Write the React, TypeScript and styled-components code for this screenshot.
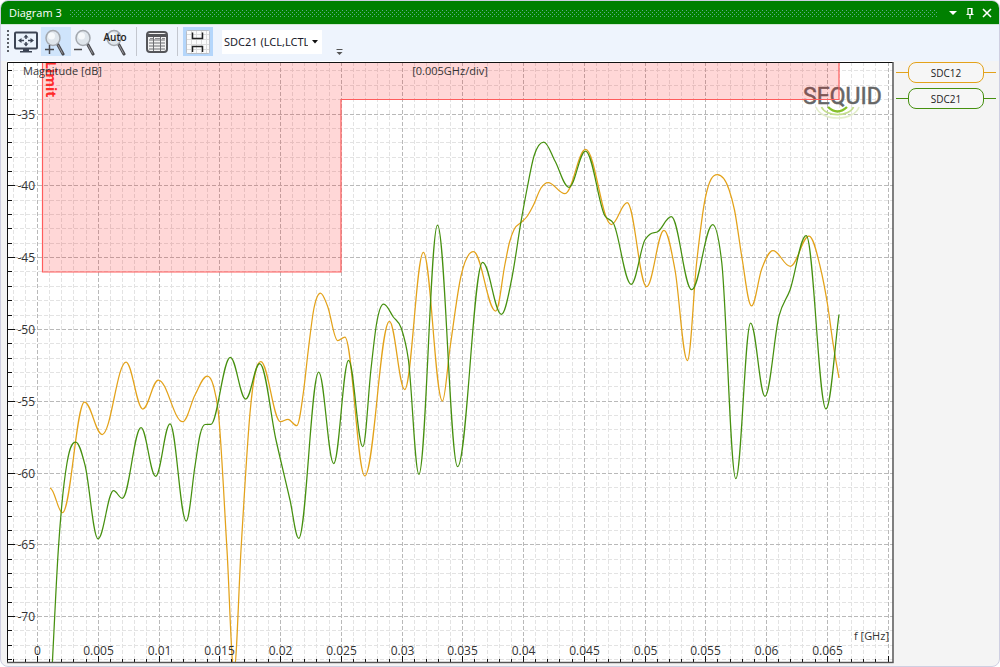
import React from "react";
import styled, { createGlobalStyle, css } from "styled-components";

const GlobalStyle = createGlobalStyle`
  *, *::before, *::after { box-sizing: border-box; }
  body { margin: 0; background: #ffffff; font-family: "Noto Sans", "Open Sans", sans-serif; font-size: 12px; color: #222222; }
`;

const Panel = styled.main`
  display: flex;
  flex-direction: column;
  min-height: 100vh;
  border: 1px solid #cfcfe2;
  border-radius: 8px;
  overflow: hidden;
  background: #f4f4f4;
`;

const TitleBar = styled.header`
  display: flex;
  align-items: center;
  gap: 8px;
  height: 24px;
  padding: 0 4px 0 8px;
  background: #008000;
  border-bottom: 1px solid #cfe6d4;
  color: #ffffff;
`;

const Title = styled.h1`
  margin: 0;
  font: 500 11px/20px "Open Sans", "Noto Sans", sans-serif;
`;

const Grip = styled.svg`
  flex: 1;
  min-width: 0;
  height: 8px;
`;

const TitleActions = styled.div`
  display: flex;
  gap: 1px;
`;

const TitleButton = styled.button`
  display: grid;
  place-items: center;
  width: 16px;
  height: 18px;
  padding: 0;
  border: 0;
  background: none;
  color: #ffffff;
`;

const Toolbar = styled.div`
  display: flex;
  align-items: center;
  height: 36px;
  padding: 0 6px 3px;
  background: #eef4fd;
`;

const ToolGrip = styled.span`
  width: 2px;
  height: 24px;
  margin-right: 2px;
  background: repeating-linear-gradient(#5c6068 0 2px, transparent 2px 4px);
`;

const ToolButton = styled.button<{ $state?: "hover" | "checked" }>`
  display: grid;
  place-items: center;
  width: 30px;
  height: 29px;
  padding: 0;
  border: 0;
  background: none;
  ${(p) => p.$state === "hover" && css`background: #cfe4fb;`}
  ${(p) => p.$state === "checked" && css`background: #b4d6fb;`}
`;

const Separator = styled.span`
  width: 1px;
  height: 29px;
  margin: 0 5px;
  background: #c3c7cf;
`;

const Combo = styled.div`
  display: grid;
  grid-template-columns: 1fr 16px;
  align-items: center;
  width: 100px;
  height: 24px;
  margin-left: 9px;
  background: #ffffff;
`;

const ComboSelect = styled.select`
  grid-area: 1 / 1 / 2 / 3;
  width: 100%;
  height: 24px;
  padding: 0 14px 0 2px;
  border: 0;
  appearance: none;
  background: none;
  color: #1b1b2c;
  font: 11px "Noto Sans", sans-serif;
`;

const ComboArrow = styled.svg`
  grid-area: 1 / 2;
  pointer-events: none;
`;

const Overflow = styled.button`
  align-self: flex-end;
  height: 10px;
  margin-left: 13px;
  padding: 0;
  border: 0;
  background: none;
  display: grid;
`;

const Body = styled.div`
  display: flex;
  align-items: flex-start;
  flex: 1;
  padding: 0 0 2px 6px;
`;

const Chart = styled.svg`
  display: block;
  flex: 1;
  min-width: 0;
  height: auto;
  background: #ffffff;
  font-family: "Open Sans", "Noto Sans", sans-serif;
`;

const Legend = styled.ul`
  display: flex;
  flex-direction: column;
  gap: 5px;
  width: 105px;
  margin: 0;
  padding: 1px 3px 0 2px;
  list-style: none;
`;

const LegendItem = styled.li<{ $color: string }>`
  display: flex;
  align-items: center;
  &::before, &::after {
    content: "";
    flex: 1;
    height: 1px;
    background: ${(p) => p.$color};
  }
`;

const LegendPill = styled.button<{ $color: string }>`
  width: 76px;
  height: 21px;
  padding: 0;
  border: 1px solid ${(p) => p.$color};
  border-radius: 8px;
  background: #f6f6f6;
  color: #222222;
  font: 10px/18px "Open Sans", "Noto Sans", sans-serif;
`;

const ORANGE = "#e3a21a";
const GREEN = "#46900f";

type Point = [number, number];

const SDC12: Point[] = [
  [50, 488], [62.5, 512.7], [84.5, 402], [102.2, 434.5], [126, 362], [142.8, 409], [158.3, 380],
  [182.7, 421.7], [195, 395], [207.3, 376], [213.5, 386], [218.3, 412], [227, 550], [234, 670],
  [241, 550], [244, 500], [250, 413], [260.8, 361.5], [280.5, 421.7], [288, 419.3],
  [296.7, 425.7], [303.3, 393], [308.3, 350], [314, 308], [320.4, 293], [327.5, 306],
  [337.7, 340.7], [344.9, 337], [364.8, 475.9], [389.4, 321.3], [404.7, 389.5], [423.4, 252.3],
  [442.4, 401], [450, 348], [461, 276], [473.4, 251.6], [495.7, 311], [505, 264], [509.3, 243],
  [514.3, 229], [521, 222.5], [527, 216.5], [533.5, 205], [541, 188], [548, 182.5],
  [565, 193.7], [585.6, 149.5], [611.4, 224.5], [627.2, 202.7], [646.6, 286.7], [664, 230.3],
  [675, 270], [687.4, 360.5], [696.7, 262], [705.3, 198], [717.3, 174.7], [729, 189.5],
  [734.5, 210], [742, 258], [751.5, 305.9], [761.7, 269], [773, 250.7], [790.3, 266.3],
  [809, 236], [820, 266], [827.3, 303], [833.3, 345], [839, 378],
];

const SDC21: Point[] = [
  [52.3, 664], [58.3, 550], [61.8, 505], [67, 463], [75.7, 442], [85, 465], [98, 538.8],
  [113.5, 490.7], [122.3, 498.3], [141, 427.6], [155.6, 476.3], [170, 423.8], [186.2, 521],
  [195, 466], [200, 435], [205, 424.5], [211, 424.3],
  [230.3, 357.3], [245.7, 399], [259.7, 363.5], [276, 440], [290, 500], [298.7, 538.3],
  [318.7, 372], [333.7, 463.5], [348.6, 360.3], [362.8, 446.7], [371, 369], [376.5, 324],
  [383.6, 304.2], [393.3, 317], [401.3, 328.3], [408.3, 359], [418.9, 474.3], [437.5, 225],
  [457.6, 466.7], [482.6, 262.3], [501.4, 314.3], [511.7, 279], [521, 221.7], [527, 189],
  [534, 156], [543.8, 142], [555, 161], [569, 187.3], [585.5, 151],
  [605, 216], [613.3, 223], [631.2, 284.3], [645, 239.7], [650, 234.3], [658, 231.5],
  [671.3, 216.7], [691.7, 289.7], [712.7, 224.7], [721.7, 262], [735.8, 478.7], [750.6, 323],
  [765, 396.3], [779, 316], [790, 290], [806.2, 235.7], [826, 408.9], [839, 314.5],
];

/** Monotone cubic interpolation: the given extrema stay the extrema of the curve. */
function smoothPath(pts: Point[]): string {
  const slopes = pts.slice(1).map(([x, y], i) => (y - pts[i][1]) / (x - pts[i][0]));
  const tangents = pts.map(([x], i) => {
    if (i === 0) return pts[1][1] < pts[0][1] ? slopes[0] : 0;
    if (i === pts.length - 1) return slopes[i - 1];
    const a = slopes[i - 1];
    const b = slopes[i];
    if (a * b <= 0) return 0;
    const before = x - pts[i - 1][0];
    const after = pts[i + 1][0] - x;
    const mean = (a * after + b * before) / (before + after);
    const limit = 2.5 * Math.min(Math.abs(a), Math.abs(b));
    return Math.sign(mean) * Math.min(Math.abs(mean), limit);
  });
  let d = `M${pts[0][0]} ${pts[0][1]}`;
  for (let i = 1; i < pts.length; i++) {
    const width = pts[i][0] - pts[i - 1][0];
    const start = width * (tangents[i - 1] === 0 ? 0.37 : 0.333);
    const end = width * (tangents[i] === 0 ? 0.37 : 0.333);
    d += `C${pts[i - 1][0] + start} ${pts[i - 1][1] + tangents[i - 1] * start} ${pts[i][0] - end} ${
      pts[i][1] - tangents[i] * end
    } ${pts[i][0]} ${pts[i][1]}`;
  }
  return d;
}

const X0 = 37.5;
const X_STEP = 12.15;
const Y0 = 114;
const Y_STEP = 14.36;

const xLines = Array.from({ length: 73 }, (_, i) => i - 2).map((n) => ({
  n,
  pos: Math.floor(X0 + n * X_STEP) + 0.5,
  major: n % 5 === 0,
}));
const yLines = Array.from({ length: 42 }, (_, i) => i - 3).map((n) => ({
  n,
  pos: Math.floor(Y0 + n * Y_STEP) + 0.5,
  major: n % 5 === 0,
}));

const LIMIT = "M42.5 62V272H341V99.5H839V62";

function DiagramChart() {
  return (
    <Chart viewBox="7 61 887 603" role="img" aria-label="Magnitude over frequency">
      <defs>
        <clipPath id="plot">
          <rect x="8" y="62" width="885" height="601" />
        </clipPath>
      </defs>
      {[false, true].map((major) => (
        <g key={String(major)} stroke={major ? "#b9b9b9" : "#e3e3e3"} strokeDasharray="4 2">
          {xLines.filter((l) => l.major === major).map((l) => (
            <path key={l.n} d={`M${l.pos} 62V663`} />
          ))}
          {yLines.filter((l) => l.major === major).map((l) => (
            <path key={l.n} d={`M8 ${l.pos}H893`} />
          ))}
        </g>
      ))}
      <g fill="none">
        <path d="M816 107a22 14 0 0 0 43 0" stroke="#e3eecb" strokeWidth="1.6" />
        <path d="M821.500 107a16.500 10 0 0 0 32 0" stroke="#c3de8c" strokeWidth="1.8" />
        <path d="M828 107q9.500 9 19 0" stroke="#86c02a" strokeWidth="2.4" />
      </g>
      <text
        x="803"
        y="104"
        fontFamily="Roboto, sans-serif"
        fontSize="23"
        fontWeight="400"
        fill="#666666"
        stroke="#666666"
        strokeWidth="0.500"
      >
        SEQUID
      </text>
      <g clipPath="url(#plot)">
        <path d={`${LIMIT}Z`} fill="#ff0000" fillOpacity="0.155" />
        <path d={LIMIT} fill="none" stroke="#ff5c5c" strokeWidth="1.200" />
        <text transform="translate(46 61) rotate(90)" fontSize="14" fontWeight="700" fill="#ff2b2b">
          Limit
        </text>
        <path d={smoothPath(SDC12)} fill="none" stroke={ORANGE} strokeWidth="1.250" />
        <path d={smoothPath(SDC21)} fill="none" stroke={GREEN} strokeWidth="1.250" />
      </g>
      <g stroke="#111111">
        {xLines.map((l) => (
          <path key={l.n} d={`M${l.pos} 663V${l.major ? 656 : 659}`} />
        ))}
        {yLines.map((l) => (
          <path key={l.n} d={`M7 ${l.pos}H${l.major ? 15 : 12}`} />
        ))}
      </g>
      <path d="M7.500 663V62.500H893" fill="none" stroke="#111111" />
      <path d="M893 62V662.500H7" fill="none" stroke="#555555" strokeWidth="1.500" />
      <g fontSize="12" fill="#333333">
        {yLines.filter((l) => l.major).map((l) => (
          <text key={l.n} x="35" y={l.pos + 4} textAnchor="end">
            {-35 - l.n}
          </text>
        ))}
        {xLines.filter((l) => l.major && l.n < 70).map((l) => (
          <text key={l.n} x={l.pos} y="655" textAnchor="middle">
            {l.n / 1000}
          </text>
        ))}
      </g>
      <g fontSize="11" fill="#333333">
        <text x="23" y="75">Magnitude [dB]</text>
        <text x="450" y="75" textAnchor="middle">[0.005GHz/div]</text>
        <text x="889" y="640" textAnchor="end">f [GHz]</text>
      </g>
    </Chart>
  );
}

function Lens({ cx, cy }: { cx: number; cy: number }) {
  return (
    <g>
      <path d={`M${cx + 4.5} ${cy + 6}l5.500 10`} stroke="#4a4a4e" strokeWidth="3" strokeLinecap="round" />
      <path d={`M${cx + 5} ${cy + 7}l4.500 8.500`} stroke="#9a9aa0" strokeWidth="1" />
      <ellipse cx={cx} cy={cy} rx="7" ry="7.500" fill="#dfe6ec" stroke="#a4a9af" strokeWidth="1.500" />
      <ellipse cx={cx - 1.5} cy={cy - 2} rx="3.500" ry="3.500" fill="#f6f9fb" />
    </g>
  );
}

function MonitorIcon() {
  return (
    <svg width="26" height="24" viewBox="0 0 26 24">
      <rect x="2" y="2.500" width="22" height="16" rx="1" fill="#eaf2fb" stroke="#3c4454" strokeWidth="2" />
      <path d="M10 19h6v2h3v1.500H7V21h3z" fill="#3c4454" />
      <path d="M13 4.500l2.500 3h-5zM13 16.500l2.500-3h-5zM5 10.500l3.500-2.500v5zM21 10.500l-3.500-2.500v5z" fill="#3c4454" />
      <path d="M7 10.500h4m4 0h4M13 6v3m0 3v3" stroke="#3c4454" strokeWidth="1.500" />
    </svg>
  );
}

function ZoomIcon({ plus }: { plus?: boolean }) {
  return (
    <svg width="26" height="28" viewBox="0 0 26 28">
      <Lens cx={10} cy={10} />
      <path d={plus ? "M2 21.500h9M6.500 17v9" : "M1 21.500h8"} stroke="#4a4a4e" strokeWidth="1.500" />
    </svg>
  );
}

function AutoZoomIcon() {
  return (
    <svg width="28" height="28" viewBox="0 0 28 28">
      <Lens cx={12} cy={10} />
      <text x="13" y="13" textAnchor="middle" fontFamily="Open Sans, sans-serif" fontSize="10" fontWeight="600" fill="#222222">
        Auto
      </text>
    </svg>
  );
}

function TableIcon() {
  return (
    <svg width="24" height="24" viewBox="0 0 24 24">
      <rect x="2" y="2" width="20" height="20" rx="3" fill="#f2f2f2" stroke="#55565a" strokeWidth="2" />
      <path d="M3 4h18v3H3z" fill="#55565a" />
      <path d="M4 10h16M4 13h16M4 16h16M4 19h16M8.500 7v14M15.500 7v14" stroke="#6d6e72" strokeWidth="1" />
      <path d="M5 8.500h3M10 8.500h5M17 8.500h3" stroke="#8a8a8e" />
    </svg>
  );
}

function SplitIcon() {
  return (
    <svg width="26" height="26" viewBox="0 0 26 26">
      <rect x="1.500" y="1.500" width="23" height="23" rx="1" fill="#fbfbfb" stroke="#b9bec6" />
      <path d="M6.500 2v22M11.500 2v22M16.500 2v22M21.500 2v22M2 5.500h22M2 10.500h22M2 15.500h22M2 20.500h22" stroke="#dcdcdc" />
      <path d="M7.500 3.500v6h10v-6M7.500 23v-5.500h10V23" fill="none" stroke="#222222" strokeWidth="1.500" />
    </svg>
  );
}

export default function App() {
  return (
    <>
      <GlobalStyle />
      <Panel>
        <TitleBar>
          <Title>Diagram 3</Title>
          <Grip aria-hidden="true">
            <defs>
              <pattern id="dots" width="4" height="4" patternUnits="userSpaceOnUse">
                <path d="M0 1h1v1H0zM2 3h1v1H2z" fill="#5aab8e" />
              </pattern>
            </defs>
            <rect width="100%" height="8" fill="url(#dots)" />
          </Grip>
          <TitleActions>
            <TitleButton aria-label="Window menu">
              <svg width="8" height="4" viewBox="0 0 8 4"><path d="M0 0h8L4 4z" fill="currentColor" /></svg>
            </TitleButton>
            <TitleButton aria-label="Pin">
              <svg width="8" height="12" viewBox="0 0 8 12">
                <path d="M2 7V1.500h4V7M5.500 1v6M.5 7.500h7M4 8v4" fill="none" stroke="currentColor" strokeWidth="1.200" />
              </svg>
            </TitleButton>
            <TitleButton aria-label="Close">
              <svg width="10" height="10" viewBox="0 0 10 10">
                <path d="M1 1l8 8M9 1l-8 8" stroke="currentColor" strokeWidth="1.600" />
              </svg>
            </TitleButton>
          </TitleActions>
        </TitleBar>
        <Toolbar role="toolbar">
          <ToolGrip />
          <ToolButton aria-label="Fit to window"><MonitorIcon /></ToolButton>
          <ToolButton aria-label="Zoom in" $state="hover"><ZoomIcon plus /></ToolButton>
          <ToolButton aria-label="Zoom out"><ZoomIcon /></ToolButton>
          <ToolButton aria-label="Auto zoom"><AutoZoomIcon /></ToolButton>
          <Separator />
          <ToolButton aria-label="Table"><TableIcon /></ToolButton>
          <Separator />
          <ToolButton aria-label="Limits" aria-pressed="true" $state="checked"><SplitIcon /></ToolButton>
          <Combo>
            <ComboSelect aria-label="Measurement">
              <option>SDC21 (LCL,LCTL)</option>
            </ComboSelect>
            <ComboArrow width="16" height="4" viewBox="0 0 16 4"><path d="M6 0h6L9 3.500z" fill="#111111" /></ComboArrow>
          </Combo>
          <Overflow aria-label="More tools">
            <svg width="9" height="8" viewBox="0 0 9 8"><path d="M1.500 1.500h6" stroke="#555555" /><path d="M1.500 4h6l-3 3z" fill="#555555" /></svg>
          </Overflow>
        </Toolbar>
        <Body>
          <DiagramChart />
          <Legend>
            <LegendItem $color={ORANGE}><LegendPill $color={ORANGE}>SDC12</LegendPill></LegendItem>
            <LegendItem $color={GREEN}><LegendPill $color={GREEN}>SDC21</LegendPill></LegendItem>
          </Legend>
        </Body>
      </Panel>
    </>
  );
}
